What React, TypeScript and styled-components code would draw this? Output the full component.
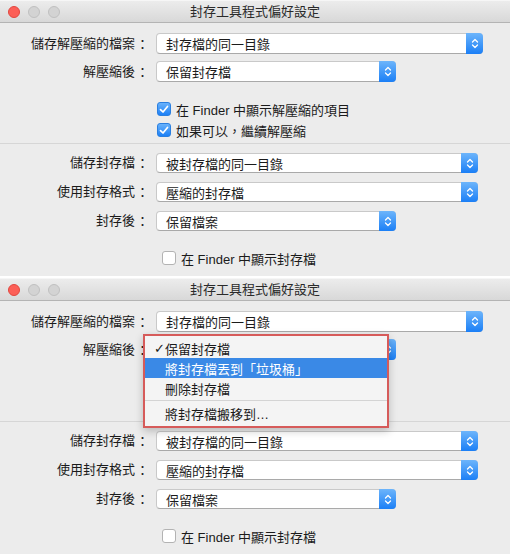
import React from 'react';
import styled, { createGlobalStyle } from 'styled-components';

const Global = createGlobalStyle`
  html, body { margin: 0; padding: 0; background: #ffffff; }
  body {
    font-family: "Liberation Sans", "Noto Sans CJK TC", sans-serif;
    font-size: 13px;
    color: #1b1b1b;
    -webkit-font-smoothing: antialiased;
  }
`;

const Page = styled.div`
  width: 510px;
  height: 555px;
  display: flex;
  flex-direction: column;
  gap: 2px;
  overflow: hidden;
  background: #ffffff;
`;

const Window = styled.section`
  position: relative;
  flex-shrink: 0;
  height: 276px;
  background: #ececec;
  display: flex;
  flex-direction: column;
`;

const TitleBar = styled.header`
  box-sizing: border-box;
  height: 23px;
  display: grid;
  grid-template-columns: 1fr auto 1fr;
  align-items: center;
  background: linear-gradient(#ececec, #d8d8d8);
  border-top: 1px solid #f6f6f6;
  border-bottom: 1px solid #b4b4b4;
`;

const Lights = styled.div`
  display: flex;
  gap: 8px;
  padding-left: 8px;
`;

const Light = styled.span<{ $color: 'red' | 'gray' }>`
  box-sizing: border-box;
  width: 12px;
  height: 12px;
  border-radius: 50%;
  background: ${(p) => (p.$color === 'red' ? '#fc5f57' : '#d3d3d3')};
  border: 1px solid ${(p) => (p.$color === 'red' ? '#e1473f' : '#c0c0c0')};
`;

const Title = styled.div`
  font-size: 13px;
  line-height: 16px;
  color: #2a2a2a;
  white-space: nowrap;
`;

const Body = styled.div`
  display: flex;
  flex-direction: column;
  padding-top: 10px;
`;

const FieldGroup = styled.div<{ $gap: number; $top: number }>`
  display: flex;
  flex-direction: column;
  gap: ${(p) => p.$gap}px;
  margin-top: ${(p) => p.$top}px;
`;

const FieldRow = styled.div<{ $h: number }>`
  display: grid;
  grid-template-columns: 149px auto;
  column-gap: 7px;
  align-items: center;
  height: ${(p) => p.$h}px;
`;

const Label = styled.span`
  display: flex;
  justify-content: flex-end;
  white-space: nowrap;
  line-height: 18px;
`;

const Colon = styled.span`
  display: inline-block;
  width: 13px;
  margin-left: 1px;
  text-align: center;
  font-family: "Noto Sans CJK TC", sans-serif;
`;

const Popup = styled.div<{ $w: number; $h: number }>`
  box-sizing: border-box;
  width: ${(p) => p.$w}px;
  height: ${(p) => p.$h}px;
  display: flex;
  background: #ffffff;
  border: 1px solid #c9c9c9;
  border-bottom-color: #a9a9a9;
  border-radius: 4px;
`;

const PopupText = styled.span`
  flex: 1;
  padding-left: 9px;
  display: flex;
  align-items: center;
  white-space: nowrap;
`;

const Stepper = styled.span`
  width: 17px;
  margin: -1px -1px -1px 0;
  border-radius: 0 4px 4px 0;
  background: linear-gradient(#6db5fb, #1b7ff6);
  display: flex;
  align-items: center;
  justify-content: center;
`;

const CheckGroup = styled.div<{ $top: number }>`
  display: flex;
  flex-direction: column;
  gap: 7px;
  margin-top: ${(p) => p.$top}px;
`;

const CoveredArea = styled.div`
  height: 35px;
  margin-top: 20px;
`;

const CheckRow = styled.label<{ $left: number }>`
  display: flex;
  align-items: center;
  gap: 5px;
  height: 14px;
  margin-left: ${(p) => p.$left}px;
  white-space: nowrap;
`;

const Box = styled.span<{ $on: boolean }>`
  box-sizing: border-box;
  width: 14px;
  height: 14px;
  border-radius: 3px;
  display: flex;
  align-items: center;
  justify-content: center;
  background: ${(p) => (p.$on ? 'linear-gradient(#69b2fb, #1c80f6)' : '#ffffff')};
  border: 1px solid ${(p) => (p.$on ? '#2a7fe0' : '#b3b3b3')};
`;

const Separator = styled.div`
  height: 1px;
  margin-top: 6px;
  background: #d6d6d6;
`;

const Menu = styled.div`
  position: absolute;
  top: 56px;
  left: 143px;
  box-sizing: border-box;
  width: 246px;
  height: 94px;
  padding: 2px 0 3px;
  background: #f4f4f4;
  border: 2px solid #d65b5a;
  box-shadow: 0 3px 8px rgba(0, 0, 0, 0.22);
  display: flex;
  flex-direction: column;
`;

const MenuItem = styled.div<{ $active?: boolean }>`
  height: 20px;
  display: grid;
  grid-template-columns: 20px 1fr;
  align-items: center;
  background: ${(p) => (p.$active ? '#3a89e6' : 'transparent')};
  color: ${(p) => (p.$active ? '#ffffff' : '#1b1b1b')};
  white-space: nowrap;
`;

const Tick = styled.span`
  padding-left: 9px;
  font-size: 13px;
  font-family: "DejaVu Sans", sans-serif;
`;

const MenuSeparator = styled.div`
  height: 1px;
  margin: 2px 0 2px;
  background: #d4d4d4;
`;

const Chevrons = () => (
  <svg width="8" height="13" viewBox="0 0 8 13">
    <path d="M1.5 5 L4 2.5 L6.5 5" fill="none" stroke="#fff" strokeWidth="1.3" strokeLinecap="round" strokeLinejoin="round" />
    <path d="M1.5 8 L4 10.5 L6.5 8" fill="none" stroke="#fff" strokeWidth="1.3" strokeLinecap="round" strokeLinejoin="round" />
  </svg>
);

const CheckMark = () => (
  <svg width="10" height="9" viewBox="0 0 10 9">
    <path d="M1.5 4.6 L4 7 L8.5 1.5" fill="none" stroke="#fff" strokeWidth="1.7" strokeLinecap="round" strokeLinejoin="round" />
  </svg>
);

const Select = ({ value, width, height }: { value: string; width: number; height: number }) => (
  <Popup $w={width} $h={height}>
    <PopupText>{value}</PopupText>
    <Stepper>
      <Chevrons />
    </Stepper>
  </Popup>
);

const Check = ({ on, text, left }: { on: boolean; text: string; left: number }) => (
  <CheckRow $left={left}>
    <Box $on={on}>{on && <CheckMark />}</Box>
    <span>{text}</span>
  </CheckRow>
);

const Field = ({ label, children, h }: { label: string; children: React.ReactNode; h: number }) => (
  <FieldRow $h={h}>
    <Label>
      {label}
      <Colon>：</Colon>
    </Label>
    {children}
  </FieldRow>
);

const PrefsWindow = ({ withMenu }: { withMenu?: boolean }) => (
  <Window>
    <TitleBar>
      <Lights>
        <Light $color="red" />
        <Light $color="gray" />
        <Light $color="gray" />
      </Lights>
      <Title>封存工具程式偏好設定</Title>
      <span />
    </TitleBar>
    <Body>
      <FieldGroup $gap={7} $top={0}>
        <Field label="儲存解壓縮的檔案" h={21}>
          <Select value="封存檔的同一目錄" width={327} height={21} />
        </Field>
        <Field label="解壓縮後" h={21}>
          <Select value="保留封存檔" width={240} height={21} />
        </Field>
      </FieldGroup>
      {withMenu ? (
        <CoveredArea />
      ) : (
        <CheckGroup $top={20}>
          <Check on text="在 Finder 中顯示解壓縮的項目" left={157} />
          <Check on text="如果可以，繼續解壓縮" left={157} />
        </CheckGroup>
      )}
      <Separator />
      <FieldGroup $gap={9} $top={9}>
        <Field label="儲存封存檔" h={20}>
          <Select value="被封存檔的同一目錄" width={322} height={20} />
        </Field>
        <Field label="使用封存格式" h={20}>
          <Select value="壓縮的封存檔" width={322} height={20} />
        </Field>
        <Field label="封存後" h={20}>
          <Select value="保留檔案" width={240} height={20} />
        </Field>
      </FieldGroup>
      <CheckGroup $top={20}>
        <Check on={false} text="在 Finder 中顯示封存檔" left={162} />
      </CheckGroup>
    </Body>
    {withMenu && (
      <Menu>
        <MenuItem>
          <Tick>✓</Tick>
          <span>保留封存檔</span>
        </MenuItem>
        <MenuItem $active>
          <span />
          <span>將封存檔丟到「垃圾桶」</span>
        </MenuItem>
        <MenuItem>
          <span />
          <span>刪除封存檔</span>
        </MenuItem>
        <MenuSeparator />
        <MenuItem>
          <span />
          <span>將封存檔搬移到…</span>
        </MenuItem>
      </Menu>
    )}
  </Window>
);

export default function App() {
  return (
    <>
      <Global />
      <Page lang="zh-Hant">
        <PrefsWindow />
        <PrefsWindow withMenu />
      </Page>
    </>
  );
}
